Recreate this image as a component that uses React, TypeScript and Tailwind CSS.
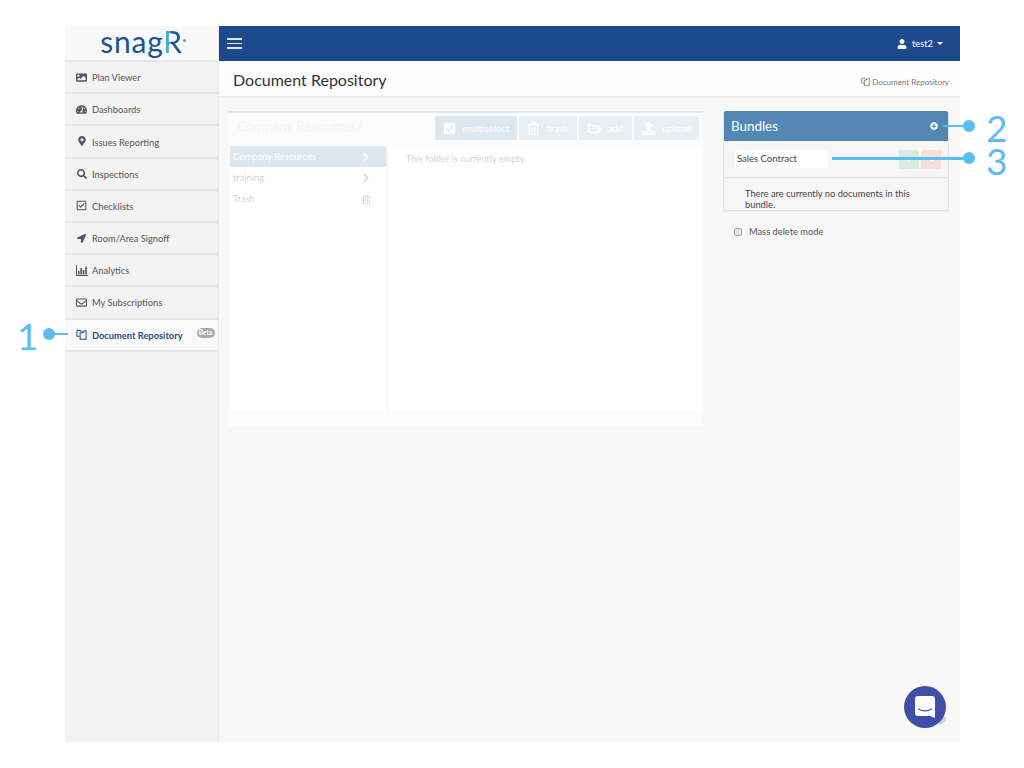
import { FaCheck, FaCheckSquare, FaRegCheckSquare, FaChevronRight, FaImage, FaLocationArrow, FaMapMarkerAlt, FaPlusCircle, FaRegEnvelope, FaRegFolderOpen, FaRegTrashAlt, FaSearch, FaTachometerAlt, FaTimes, FaUpload, FaUser } from "react-icons/fa";

function FilesIcon({ size }: { size: number }) {
  return (
    <svg width={size} height={size} viewBox="0 0 12 12" fill="none" stroke="currentColor" strokeWidth="1.1">
      <path d="M1 1.5h3.5l1.5 1.5M1 1.5v6.5h3" />
      <path d="M4.5 4h3l2-2.2h1.5v9.5H4.5z" />
      <path d="M7.5 4V1.8" />
    </svg>
  );
}

function BarsIcon() {
  return (
    <svg width="12" height="11" viewBox="0 0 12 11" fill="currentColor">
      <path d="M0 0h1v10h11v1H0z" />
      <path d="M2 6h1.6v3.5H2zM4.4 3h1.6v6.5H4.4zM6.8 5h1.6v4.5H6.8zM9.2 1.5h1.6v8H9.2z" />
    </svg>
  );
}

const navItems = [
  { label: "Plan Viewer", icon: <FaImage size={11} /> },
  { label: "Dashboards", icon: <FaTachometerAlt size={11} /> },
  { label: "Issues Reporting", icon: <FaMapMarkerAlt size={10} /> },
  { label: "Inspections", icon: <FaSearch size={10} /> },
  { label: "Checklists", icon: <FaRegCheckSquare size={11} /> },
  { label: "Room/Area Signoff", icon: <FaLocationArrow size={9} /> },
  { label: "Analytics", icon: <BarsIcon /> },
  { label: "My Subscriptions", icon: <FaRegEnvelope size={11} /> },
];

const toolButtons = [
  { label: "multiselect", Icon: FaCheckSquare, width: "w-[82px]", bg: "bg-[#dce7ef]" },
  { label: "trash", Icon: FaRegTrashAlt, width: "w-[58px]", bg: "bg-[#e8eff4]" },
  { label: "add", Icon: FaRegFolderOpen, width: "w-[53px]", bg: "bg-[#e8eff4]" },
  { label: "upload", Icon: FaUpload, width: "w-[65px]", bg: "bg-[#e8eff4]" },
];

function Sidebar() {
  return (
    <aside className="w-[154px] shrink-0 bg-[#f3f3f3] border-r border-[#e8e8e8]">
      <div className="h-[36px] bg-[#f8f8f8] border-b-2 border-[#e6e6e6] flex items-center justify-center">
        <span className="relative text-[30px] leading-none tracking-[0.8px] text-[#1f5294] font-normal -mt-[4px]">
          snag<span className="bg-[linear-gradient(90deg,#4aa8dc_38%,#1f5294_38%)] bg-clip-text text-transparent">R</span>
          <span className="absolute -right-[3px] top-[13px] w-[3px] h-[3px] rounded-full bg-[#4a9bd0]" />
        </span>
      </div>
      {navItems.map(({ label, icon }) => (
        <div key={label} className="h-[32.2px] flex items-center pl-[6px] border-b-2 border-[#e6e6e6] text-[#555]">
          <span className="w-[21px] shrink-0 flex justify-center">{icon}</span>
          <span className="text-[9.3px] whitespace-nowrap mt-[2px]">{label}</span>
        </div>
      ))}
      <div className="h-[32.2px] flex items-center pl-[6px] bg-[#f9f9f9] border-b-2 border-[#e6e6e6] text-[#1f4f8f]">
        <span className="w-[21px] shrink-0 flex justify-center"><FilesIcon size={11} /></span>
        <span className="text-[9.3px] font-bold whitespace-nowrap mt-[2px]">Document Repository</span>
        <span className="ml-[14px] -mt-[4px] w-[18px] h-[10px] shrink-0 rounded-full bg-[#aaa] text-white text-[6.5px] leading-[10px] text-center font-bold">Beta</span>
      </div>
    </aside>
  );
}

function Repository() {
  return (
    <div className="w-[475px] h-[316px] bg-[#fcfcfc] flex flex-col">
      <div className="h-[2px] bg-[#e2ebf3] mt-[1px]" />
      <div className="h-[33px] flex items-center justify-between pl-[9px] pr-[4px]">
        <span className="text-[13.5px] text-[#f4f4f4] -mt-[6px]">Company Resources/</span>
        <div className="flex gap-[2px] -mt-[3px]">
          {toolButtons.map(({ label, Icon, width, bg }) => (
            <div key={label} className={`${width} ${bg} h-[24px] rounded-[2px] flex items-center justify-center gap-[7px] text-white text-[9.7px]`}>
              <Icon size={13} />
              {label}
            </div>
          ))}
        </div>
      </div>
      <div className="mx-[2px] h-[264px] bg-white flex">
        <div className="w-[158px] border-r-2 border-[#f6f6f6] text-[9.4px] text-[#d4d4d4]">
          <div className="h-[21px] bg-[#dce7f2] text-white flex items-center justify-between pl-[3px] pr-[15px] pt-[1px]">
            Company Resources <FaChevronRight size={10} />
          </div>
          <div className="h-[21px] flex items-center justify-between pl-[3px] pr-[15px] pt-[1px]">
            training <FaChevronRight size={10} />
          </div>
          <div className="h-[21px] flex items-center justify-between pl-[3px] pr-[15px] pt-[1px]">
            Trash <FaRegTrashAlt size={9} />
          </div>
        </div>
        <p className="pl-[18px] pt-[6px] text-[9.3px] text-[#d4d4d4]">This folder is currently empty.</p>
      </div>
    </div>
  );
}

function Bundles() {
  return (
    <div className="pt-[1px]">
      <div className="w-[226px] rounded-[2px] border border-[#e2e2e2] border-t-0 shadow-[0_1px_1px_rgba(0,0,0,0.05)] bg-[#f6f6f6]">
        <div className="h-[30px] bg-[#5388b4] rounded-t-[2px] flex items-center justify-between pl-[7px] pr-[10px] text-white">
          <span className="text-[13.4px]">Bundles</span>
          <FaPlusCircle size={8} />
        </div>
        <div className="h-[37px] border-b border-[#e2e2e2] flex items-center justify-between pl-[11px] pr-[7px]">
          <div className="w-[93px] h-[18px] bg-white pl-[2px] text-[9.5px] leading-[18px] text-[#444]">Sales Contract</div>
          <div className="flex gap-[2px]">
            <div className="w-[20px] h-[19px] bg-[#dcebdf] flex items-center justify-center text-white"><FaCheck size={5} /></div>
            <div className="w-[20px] h-[19px] bg-[#f8dfdc] flex items-center justify-center text-white"><FaTimes size={5} /></div>
          </div>
        </div>
        <p className="pl-[21px] pr-[30px] pt-[10px] h-[32px] text-[9.3px] leading-[11px] text-[#444]">
          There are currently no documents in this bundle.
        </p>
      </div>
      <div className="mt-[14px] ml-[11px] flex items-center gap-[7px] text-[9.3px] text-[#555]">
        <span className="w-[8px] h-[8px] rounded-[2px] border border-[#aaa] bg-[#e2e2e2]" />
        Mass delete mode
      </div>
    </div>
  );
}

function Callouts() {
  const tone = "absolute bg-[#5cbdf5]";
  const digit = "absolute text-[37px] leading-[27px] font-normal text-[#5cbdf5]";
  return (
    <>
      <span className={`${digit} left-[17px] top-[322px]`}>1</span>
      <div className={`${tone} left-[43px] top-[328px] w-[12px] h-[12px] rounded-full`} />
      <div className={`${tone} left-[50px] top-[333px] w-[18px] h-[2px]`} />
      <span className={`${digit} left-[986px] top-[114px]`}>2</span>
      <div className={`${tone} left-[963px] top-[120px] w-[12px] h-[12px] rounded-full`} />
      <div className={`${tone} left-[943px] top-[125px] w-[24px] h-[2px]`} />
      <span className={`${digit} left-[986px] top-[147px]`}>3</span>
      <div className={`${tone} left-[963px] top-[152px] w-[12px] h-[12px] rounded-full`} />
      <div className={`${tone} left-[832px] top-[157px] w-[134px] h-[3px]`} />
    </>
  );
}

export default function App() {
  return (
    <div className="relative w-[1024px] h-[768px] overflow-hidden bg-white pt-[26px] pl-[65px] font-['Lato',sans-serif]">
      <div className="w-[895px] h-[716px] flex bg-[#f8f8f8]">
        <Sidebar />
        <main className="flex-1 flex flex-col">
          <div className="h-[35px] bg-[#1d4a8c] flex items-center justify-between pl-[8px] pr-[17px] text-white">
            <div className="flex flex-col gap-[3px]">
              <div className="w-[15px] h-[1.5px] bg-[#dfe7f2]" />
              <div className="w-[15px] h-[1.5px] bg-[#dfe7f2]" />
              <div className="w-[15px] h-[1.5px] bg-[#dfe7f2]" />
            </div>
            <div className="flex items-center gap-[4px] text-[9.3px]">
              <FaUser size={10} className="mr-[1px]" />
              test2
              <span className="w-0 h-0 border-x-[3px] border-x-transparent border-t-[3px] border-t-white" />
            </div>
          </div>
          <div className="h-[37px] bg-[#fdfdfd] border-b-2 border-[#eeeeee] flex items-center justify-between pl-[14px] pr-[11px]">
            <h1 className="text-[16px] text-[#333] mt-[3px]">Document Repository</h1>
            <span className="flex items-center gap-[2px] text-[8px] text-[#777] mt-[6px]"><FilesIcon size={9} />Document Repository</span>
          </div>
          <div className="flex pl-[9px] pt-[12px] gap-[20px]">
            <Repository />
            <Bundles />
          </div>
        </main>
      </div>
      <Callouts />
      <div className="absolute left-[937px] top-[717px] w-[9px] h-[6px] -rotate-45 bg-[#cfcfcf]" />
      <div className="absolute left-[904px] top-[686px] w-[42px] h-[42px] rounded-full bg-[#3f4fa8] flex items-center justify-center">
        <svg width="20" height="22" viewBox="0 0 20 22">
          <path d="M3 0h14a3 3 0 0 1 3 3v19l-5-2H3a3 3 0 0 1-3-3V3a3 3 0 0 1 3-3z" fill="#fff" />
          <path d="M3.5 13c4 2.4 9 2.4 13 0" fill="none" stroke="#3f4fa8" strokeWidth="1.2" strokeLinecap="round" />
        </svg>
      </div>
    </div>
  );
}
